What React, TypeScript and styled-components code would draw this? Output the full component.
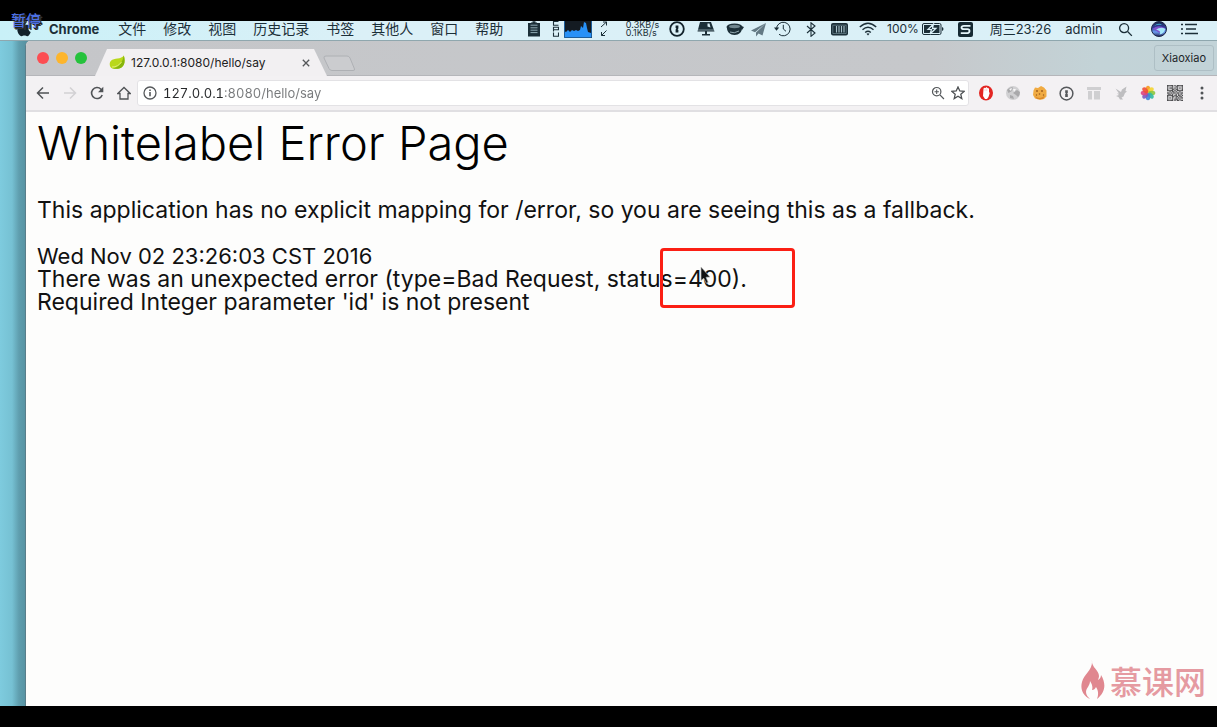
import React from "react";
import styled, { createGlobalStyle } from "styled-components";

const Global = createGlobalStyle`
  * { box-sizing: border-box; }
  body { margin: 0; background: #000; }
  button, input { font: inherit; color: inherit; margin: 0; padding: 0; border: 0; background: none; }
  svg { display: block; flex: none; }
`;

const ui = `Inter, "Noto Sans CJK SC", sans-serif`;

const Player = styled.div`
  position: relative;
  display: flex;
  flex-direction: column;
  min-height: 100vh;
  padding: 21px 0;
  background: #000;
  font-family: ${ui};
`;

const PauseLabel = styled.div`
  position: absolute;
  top: 11px;
  left: 11px;
  z-index: 2;
  font-size: 15px;
  font-weight: 500;
  line-height: 20px;
  color: #4c70e4;
  text-shadow: 1px 1px #222, 2px 2px #333;
`;

const Desktop = styled.div`
  flex: 1;
  display: flex;
  flex-direction: column;
  background: linear-gradient(90deg, #7ecbde 0, #76c1d3 12px, #5f9eae 19px, #5692a2 26px);
`;

const MenuBar = styled.header`
  display: flex;
  align-items: center;
  height: 20px;
  padding: 0 19px 3px 17px;
  background: linear-gradient(90deg, #c9f1f8, #dbf0f7 30%, #daf0f7);
  border-bottom: 1px solid #8fa7ae;
  color: #1c2f38;
`;

const Menus = styled.nav`
  display: flex;
  gap: 17px;
  margin-left: 18px;
`;

const MenuButton = styled.button<{ $app?: boolean }>`
  padding-right: ${(p) => (p.$app ? 2 : 0)}px;
  font-size: ${(p) => (p.$app ? 13 : 14)}px;
  line-height: 16px;
  font-weight: ${(p) => (p.$app ? 700 : 400)};
  white-space: nowrap;
`;

const Status = styled.div`
  display: flex;
  align-items: center;
  margin-left: auto;
`;

const StatusItem = styled.div<{ $gap: number; $w: number }>`
  flex: none;
  display: flex;
  justify-content: center;
  width: ${(p) => p.$w}px;
  margin-left: ${(p) => p.$gap}px;
  font-size: 13px;
  line-height: 16px;
  white-space: nowrap;
`;

const Rates = styled.div`
  font-size: 9px;
  line-height: 8px;
`;

const Small = styled.span`
  font-size: 12px;
`;

const Window = styled.main`
  flex: 1;
  display: flex;
  flex-direction: column;
  margin-left: 25px;
  border-left: 1px solid #5a7f8b;
  border-top-left-radius: 5px;
  background: #fdfdfc;
  overflow: hidden;
`;

const TabStrip = styled.div`
  display: flex;
  align-items: flex-end;
  height: 35px;
  padding: 0 3px 0 11px;
  background: linear-gradient(90deg, #c5c6c9 0, #c6c8cb 76%, #c3d3d7 90%, #c2d3d8);
  border-bottom: 1px solid #b5b6ba;
`;

const Lights = styled.div`
  display: flex;
  align-self: center;
  gap: 7px;
`;

const Light = styled.button<{ $color: string }>`
  width: 12px;
  height: 12px;
  border-radius: 50%;
  background: ${(p) => p.$color};
`;

const Tab = styled.div`
  display: flex;
  align-items: center;
  width: 232px;
  height: 27px;
  margin: 0 0 -1px 8px;
  padding: 0 16px 0 14px;
  background: #f2f0f2;
  clip-path: polygon(0 100%, 12px 0, 219px 0, 232px 100%);
  color: #222;
`;

const TabTitle = styled.span`
  flex: 1;
  margin-left: 6px;
  font-size: 12px;
  line-height: 16px;
`;

const TabClose = styled.button`
  width: 10px;
  height: 10px;
`;

const NewTab = styled.button`
  align-self: flex-end;
  margin: 0 0 3px -5px;
`;

const Profile = styled.button`
  height: 26px;
  margin: 0 0 4px auto;
  padding: 0 7px;
  border: 1px solid #aebfc5;
  border-radius: 3px;
  font-size: 11px;
  color: #1d2529;
`;

const Toolbar = styled.div`
  display: flex;
  align-items: center;
  height: 36px;
  padding: 0 2px 0 3px;
  background: #f3f1f3;
  border-bottom: 2px solid #e0dfe2;
`;

const Tool = styled.button`
  display: flex;
  align-items: center;
  justify-content: center;
  flex: none;
  width: 27px;
  height: 26px;
`;

const Omnibox = styled.form`
  flex: 1;
  display: flex;
  align-items: center;
  gap: 6px;
  height: 26px;
  padding: 0 3px 0 5px;
  border: 1px solid #e3e2e5;
  border-radius: 3px;
  background: #fff;
`;

const Address = styled.input`
  flex: 1;
  min-width: 0;
  height: 20px;
  outline: 0;
  font-size: 13px;
  font-variant-numeric: tabular-nums;
  background: linear-gradient(90deg, #26282a 61px, #77797b 61px);
  background-clip: text;
  -webkit-text-fill-color: transparent;
`;

const Extensions = styled.div`
  display: flex;
  margin-left: 3px;
`;

const Page = styled.article`
  position: relative;
  flex: 1;
  padding: 4px 11px;
  font-family: Inter, sans-serif;
  font-size: 23px;
  line-height: 23px;
  color: #111;
`;

const Title = styled.h1`
  margin: 0 0 29px;
  font-size: 47px;
  line-height: 54px;
  font-weight: 300;
  color: #000;
`;

const Text = styled.p`
  margin: 0 0 23px;
`;

const Created = styled.div`
  font-size: 22px;
`;

const Highlight = styled.div`
  position: absolute;
  top: 136px;
  left: 634px;
  width: 135px;
  height: 60px;
  border: 3px solid #fb1f14;
  border-radius: 4px;
`;

const Pointer = styled.svg`
  position: absolute;
  top: 155px;
  left: 674px;
`;

const Watermark = styled.div`
  position: absolute;
  right: 11px;
  bottom: 6px;
  display: flex;
  align-items: center;
  gap: 5px;
  font-family: "Noto Sans CJK SC", sans-serif;
  font-size: 32px;
  font-weight: 500;
  line-height: 40px;
  color: #e59aa1;
`;

const ink = "#1c2f38";

const OnePassword = ({ size, color, w }: { size: number; color: string; w: number }) => (
  <svg width={size} height={size} viewBox="0 0 16 16">
    <circle cx="8" cy="8" r="6.8" fill="none" stroke={color} strokeWidth={w} />
    <path d="M6.6 4.4h2.8v3l-.8.8.8.7v2.7H6.6v-3l.8-.8-.8-.7z" fill={color} />
  </svg>
);

const Glass = ({ size, plus }: { size: number; plus?: boolean }) => (
  <svg width={size} height={size} viewBox="0 0 16 16" fill="none" stroke={plus ? "#55585b" : ink} strokeWidth="1.4">
    <circle cx="6.5" cy="6.5" r="4.8" />
    <path d="M10.2 10.2l4.6 4.6" />
    {plus && <path d="M4 6.5h5M6.5 4v5" strokeWidth="1.2" />}
  </svg>
);

const qr = [
  "1111101011111", "1000100110001", "1011101010101", "1000110110001", "1111101011111", "0010110100100",
  "1101011011011", "0110100101010", "1111101101101", "1000110110110", "1010100101011", "1000101110100", "1111101011011",
];

const menus = ["文件", "修改", "视图", "历史记录", "书签", "其他人", "窗口", "帮助"];

export default function App() {
  return (
    <Player>
      <Global />
      <PauseLabel>暂停</PauseLabel>
      <Desktop>
        <MenuBar>
          <svg width="14" height="16" viewBox="0 0 14 16" fill="#12222b">
            <path d="M7 4.500C8 4.400 9 3.600 10.300 3.700c1.200.1 2.200.7 2.800 1.600-2.400 1.500-2 4.700.6 5.700-.6 1.800-2 4.300-3.500 4.300-1.100 0-1.500-.7-2.800-.7s-1.800.7-2.800.7C2.500 15.300.3 11.600.3 8.600c0-3.200 1.900-4.800 3.800-4.800 1.200 0 2.100.7 2.900.7zM9.800 0c.2 1.700-1.300 3.400-2.900 3.300C6.700 1.600 8.200.2 9.800 0z" />
          </svg>
          <Menus>
            <MenuButton $app>Chrome</MenuButton>
            {menus.map((m) => <MenuButton key={m}>{m}</MenuButton>)}
          </Menus>
          <Status>
            <StatusItem $gap={0} $w={14}>
              <svg width="14" height="16" viewBox="0 0 14 16">
                <path d="M1 2h3v-.5h1.500V.3h3v1.200H10V2h3v13.500H1z" fill={ink} />
                <path d="M3.500 4.200h7M3.500 6.800h7M3.500 9.200h7M3.500 11.600h7" stroke="#8fa9b2" />
              </svg>
            </StatusItem>
            <StatusItem $gap={11} $w={7}>
              <svg width="7" height="16" viewBox="0 0 7 16" fill="none" stroke={ink} strokeWidth="1.100">
                <path d="M6.500.5h-5v3.800h5M1.500 10.500V6.300h5v2.400h-5M1.500 11.500v3.800h5v-3.800" />
              </svg>
            </StatusItem>
            <StatusItem $gap={5} $w={28}>
              <svg width="28" height="17" viewBox="0 0 28 17">
                <path d="M0 0h28v17H0z" fill="#141b22" />
                <path d="M0 17V10l2 1 2-2 2 2 2-2 2 1 2-1 2 1 2-1 1-4 2 2 1-6 2 1 1 5 1 4 3 1v5z" fill="#2791f7" />
                <path d="M.5 0v16.500h27V0" fill="none" stroke="#1d5e9b" />
              </svg>
            </StatusItem>
            <StatusItem $gap={8} $w={8}>
              <svg width="8" height="16" viewBox="0 0 8 16" fill="none" stroke={ink}>
                <path d="M1 6l5.500-5M3 1h3.500v3.500M6.500 9.500L1.500 14.500M1.500 11v3.500H5" />
              </svg>
            </StatusItem>
            <StatusItem $gap={17} $w={35}><Rates>0.3KB/s<br />0.1KB/s</Rates></StatusItem>
            <StatusItem $gap={9} $w={16}><OnePassword size={16} color="#12222b" w={1.8} /></StatusItem>
            <StatusItem $gap={12} $w={18}>
              <svg width="18" height="16" viewBox="0 0 18 16" fill={ink}>
                <path d="M3 1h11l3.500 9.500H.5zM8 10h2v3h3v1.500H5V13h3z" />
                <path d="M10.500 2.500h2l1 4-3-1z" fill="#d5eaf1" />
                <path d="M1 9h16" stroke="#a9c0c8" strokeWidth=".7" />
              </svg>
            </StatusItem>
            <StatusItem $gap={11} $w={18}>
              <svg width="18" height="14" viewBox="0 0 18 14">
                <ellipse cx="8.500" cy="5" rx="8" ry="3.600" fill={ink} />
                <path d="M1 6c0 4 3 7 7.500 7S16 10 16 6z" fill={ink} />
                <ellipse cx="8.500" cy="4.500" rx="5.500" ry="1.700" fill="#6f858e" />
                <path d="M4 10q4 2 9-1" stroke="#93a9b1" fill="none" />
                <path d="M15 4l3 1-2 3z" fill={ink} />
              </svg>
            </StatusItem>
            <StatusItem $gap={7} $w={15}>
              <svg width="15" height="15" viewBox="0 0 15 15" fill="#637984">
                <path d="M15 1L0 8.500l4 1.700zM15 1L5 10.500v4l2.500-3 4 2z" />
              </svg>
            </StatusItem>
            <StatusItem $gap={8} $w={17}>
              <svg width="17" height="16" viewBox="0 0 17 16" fill="none" stroke={ink}>
                <path d="M2.500 8A6.800 6.800 0 1 1 5 13.300M9.300 3.800V8l2.700 2.300" />
                <path d="M0 6.500h5.200L2.500 9.800z" fill={ink} stroke="none" />
              </svg>
            </StatusItem>
            <StatusItem $gap={15} $w={10}>
              <svg width="10" height="15" viewBox="0 0 10 15" fill="none" stroke={ink} strokeWidth="1.100">
                <path d="M1 4l8 7-4 3.300V.8L9 4l-8 7" />
              </svg>
            </StatusItem>
            <StatusItem $gap={15} $w={17}>
              <svg width="17" height="13" viewBox="0 0 17 13">
                <rect width="17" height="12.500" rx="2" fill={ink} />
                <path d="M5.500 3v6.500M8 3v6.500M10.500 3v6.500M13 3v6.500" stroke="#a9c2cb" strokeWidth="1.100" />
                <path d="M1.800 2.200h13.400v8.300H1.800z" fill="none" stroke="#7d98a2" strokeWidth=".6" />
              </svg>
            </StatusItem>
            <StatusItem $gap={11} $w={18}>
              <svg width="18" height="14" viewBox="0 0 18 14" fill="none" stroke={ink} strokeWidth="1.400">
                <path d="M.8 5q8.200-7.500 16.400 0M3.500 7.800q5.500-5 11 0M6.200 10.400q2.800-2.500 5.600 0" />
                <path d="M7.500 11.800L9 13.500l1.500-1.700q-1.500-1.200-3 0z" fill={ink} stroke="none" />
              </svg>
            </StatusItem>
            <StatusItem $gap={11} $w={30}><Small>100%</Small></StatusItem>
            <StatusItem $gap={4} $w={22}>
              <svg width="22" height="12" viewBox="0 0 22 12">
                <rect x=".5" y=".5" width="18.500" height="11" rx="1.500" fill="none" stroke={ink} />
                <path d="M2 2h15.500v8H2z" fill={ink} />
                <path d="M11.500 1L6 6.500h3.500L8 11l6-5.700h-3.500z" fill={ink} stroke="#daf0f7" strokeWidth="1.200" />
                <path d="M20 4v4q1.500-.5 1.500-2T20 4z" fill={ink} />
              </svg>
            </StatusItem>
            <StatusItem $gap={14} $w={15}>
              <svg width="15" height="15" viewBox="0 0 15 15">
                <rect width="15" height="15" rx="2" fill="#162a33" />
                <path d="M12.500 3.800H6Q3.500 3.800 3.500 5.500T6 7.200h3.500q2 0 2 1.900t-2 2H2.800" fill="none" stroke="#e4f5fa" strokeWidth="1.800" />
              </svg>
            </StatusItem>
            <StatusItem $gap={15} $w={65}>周三23:26</StatusItem>
            <StatusItem $gap={11} $w={40}>admin</StatusItem>
            <StatusItem $gap={13} $w={16}><Glass size={15} /></StatusItem>
            <StatusItem $gap={18} $w={16}>
              <svg width="16" height="16" viewBox="0 0 16 16">
                <defs>
                  <linearGradient id="siri" x1="0" y1="0" x2="0" y2="1">
                    <stop offset="0" stopColor="#172a48" /><stop offset=".4" stopColor="#343c9e" />
                    <stop offset=".7" stopColor="#6b9cf0" /><stop offset="1" stopColor="#212353" />
                  </linearGradient>
                </defs>
                <circle cx="8" cy="8" r="7.500" fill="url(#siri)" stroke="#1c2748" strokeWidth="1" />
                <path d="M1.500 8q5-5 12.500-1-4 6-7 4-2-2-5.500-3z" fill="#7e52cc" />
                <path d="M5 8.500q5-3 9.500-.5-2 5-6 5.500Q11 10 5 8.500z" fill="#a5e8fa" />
                <path d="M3 5q5-4 8-1-4-1-8 1z" fill="#3fb3d8" />
              </svg>
            </StatusItem>
            <StatusItem $gap={14} $w={17}>
              <svg width="17" height="12" viewBox="0 0 17 12" stroke={ink} strokeWidth="1.600">
                <path d="M0 1.500h2M4 1.500h12M0 6h2M5 6h10M0 10.500h2M4 10.500h13" />
              </svg>
            </StatusItem>
          </Status>
        </MenuBar>

        <Window>
          <TabStrip>
            <Lights>
              <Light $color="#fc4d52" aria-label="Close" />
              <Light $color="#fdb52c" aria-label="Minimize" />
              <Light $color="#25c23c" aria-label="Zoom" />
            </Lights>
            <Tab>
              <svg width="16" height="15" viewBox="0 0 16 15">
                <path d="M14.800.5c1.600 5 .8 9.700-2 11.800-2.600 2-7 1.600-9.600 1.200C.3 12 0 8 2 5.800 5 2.800 12.500 4.500 14.800.5z" fill="#b9d81a" />
                <path d="M14.800.5c1.600 5 .8 9.700-2 11.800-2.600 2-7 1.600-9.600 1.200 5-.5 10-4 11.600-13z" fill="#86b50c" />
                <path d="M3 12q6 0 9.500-5" stroke="#dfee78" fill="none" />
              </svg>
              <TabTitle>127.0.0.1:8080/hello/say</TabTitle>
              <TabClose aria-label="Close tab">
                <svg width="10" height="10" viewBox="0 0 10 10" stroke="#55575a" strokeWidth="1.300"><path d="M1.800 1.800l6.400 6.400M8.200 1.800L1.800 8.200" /></svg>
              </TabClose>
            </Tab>
            <NewTab aria-label="New tab">
              <svg width="34" height="17" viewBox="0 0 34 17"><path d="M4 1h21q2 0 3 2l4.500 11q.5 1.500-1.500 1.500H10q-2 0-3-2L2 3Q1.500 1 4 1z" fill="#cbcccf" stroke="#aeb0b4" /></svg>
            </NewTab>
            <Profile>Xiaoxiao</Profile>
          </TabStrip>

          <Toolbar>
            <Tool aria-label="Back"><svg width="14" height="14" viewBox="0 0 14 14" fill="none" stroke="#505356" strokeWidth="1.500"><path d="M13 7H1.500M7 1.500L1.500 7 7 12.500" /></svg></Tool>
            <Tool aria-label="Forward"><svg width="14" height="14" viewBox="0 0 14 14" fill="none" stroke="#d2d1d4" strokeWidth="1.500"><path d="M1 7h11.500M7 1.500L12.500 7 7 12.500" /></svg></Tool>
            <Tool aria-label="Reload"><svg width="14" height="14" viewBox="0 0 14 14" fill="none" stroke="#505356" strokeWidth="1.600"><path d="M12.200 9A5.500 5.500 0 1 1 11 3.200l1.300 1.500" /><path d="M13.300.8v5.400H8z" fill="#505356" stroke="none" /></svg></Tool>
            <Tool aria-label="Home"><svg width="14" height="14" viewBox="0 0 14 14" fill="none" stroke="#505356" strokeWidth="1.300"><path d="M.8 7.500L7 1.500l6.200 6H11V13H3V7.500z" /></svg></Tool>
            <Omnibox>
              <svg width="14" height="14" viewBox="0 0 14 14" fill="none" stroke="#55585b" strokeWidth="1.300"><circle cx="7" cy="7" r="6" /><path d="M7 6v4.300M7 3.500V5" strokeWidth="1.600" /></svg>
              <Address aria-label="Address" defaultValue="127.0.0.1:8080/hello/say" />
              <Glass size={14} plus />
              <svg width="14" height="14" viewBox="0 0 14 14" fill="none" stroke="#4d5053" strokeWidth="1.300"><path d="M7 1l1.800 4 4.300.4-3.300 2.900 1 4.300L7 10.300l-3.800 2.300 1-4.300L.9 5.400 5.200 5z" /></svg>
            </Omnibox>
            <Extensions>
              <Tool aria-label="AdBlock">
                <svg width="16" height="16" viewBox="0 0 16 16"><ellipse cx="8" cy="8" rx="7" ry="7.500" fill="#e32622" /><path d="M5.500 3.500l1-.8 1 .2 1-.9 1 1 1.500.5V8l1-1-1.500 5-1.500 2H7L5 11z" fill="#fff" /><path d="M7 3.500V6M8.700 3.500V6" stroke="#f5b7b5" strokeWidth=".5" /></svg>
              </Tool>
              <Tool aria-label="Globe">
                <svg width="16" height="16" viewBox="0 0 16 16"><circle cx="8" cy="8" r="7" fill="#d0d0d2" /><path d="M2 5q3-3.500 6-2.500L7 6 3.500 8zM8 8l4-3 3 2q0 3-2 5l-2-2zM5 10l3 1 1 3-4-1z" fill="#a9a9ab" /><path d="M4 4l3-1-1 3zM8 4l3 0-2 3z" fill="#f7f7f7" /></svg>
              </Tool>
              <Tool aria-label="Cookies">
                <svg width="16" height="16" viewBox="0 0 16 16"><path d="M3 2.500L6 3l3-2 3 1.500 2.500 3v6L12 14l-4 1-5-1.500L1 10l.5-4.500z" fill="#f0ab42" /><path d="M3 11q5 4 10-.5l-2 3.500H5z" fill="#d9882a" /><g fill="#9a5a1c"><circle cx="5" cy="6" r=".9" /><circle cx="10" cy="6" r=".9" /><circle cx="7.500" cy="9" r=".8" /><circle cx="11.500" cy="10" r=".7" /><circle cx="4.500" cy="10" r=".7" /></g></svg>
              </Tool>
              <Tool aria-label="1Password"><OnePassword size={15} color="#55585b" w={1.6} /></Tool>
              <Tool aria-label="Layout">
                <svg width="16" height="16" viewBox="0 0 16 16" fill="#cfcfd1"><path d="M1 2h14v3H1zM2 6h4v8.500H2zM8 6h6v8.500H8z" /></svg>
              </Tool>
              <Tool aria-label="Bird">
                <svg width="14" height="16" viewBox="0 0 14 16" fill="#bebec0"><path d="M1.500 3.500L7 7l1-2.500L12.500 1.500 11.500 6l1.500.5-2 1.500-1.500 3.500L7.500 12.500l1.500 2H6L4.500 12 2 11l3-1L3 8.500h2z" /></svg>
              </Tool>
              <Tool aria-label="Photos">
                <svg width="16" height="16" viewBox="0 0 16 16">
                  {["#f79a1e", "#f4d52f", "#8bc63f", "#30b9a0", "#3d86d8", "#7e5abf", "#dd4682", "#ef5036"].map((c, i) => (
                    <ellipse key={c} cx="8" cy="4.200" rx="2.300" ry="3.500" fill={c} opacity=".9" transform={`rotate(${i * 45} 8 8)`} />
                  ))}
                </svg>
              </Tool>
              <Tool aria-label="QR code">
                <svg width="16" height="16" viewBox="0 0 13 13" fill="#4c4c4e">
                  <path d="M0 0h13v13H0z" fill="#d5d4d6" />
                  {qr.map((row, y) => row.split("").map((b, x) => b === "1" && <rect key={`${x}-${y}`} x={x} y={y} width="1" height="1" />))}
                </svg>
              </Tool>
              <Tool aria-label="Menu"><svg width="4" height="14" viewBox="0 0 4 14" fill="#505356"><circle cx="2" cy="2" r="1.500" /><circle cx="2" cy="7" r="1.500" /><circle cx="2" cy="12" r="1.500" /></svg></Tool>
            </Extensions>
          </Toolbar>

          <Page>
            <Title>Whitelabel Error Page</Title>
            <Text>This application has no explicit mapping for /error, so you are seeing this as a fallback.</Text>
            <Created>Wed Nov 02 23:26:03 CST 2016</Created>
            <div>There was an unexpected error (type=Bad Request, status=400).</div>
            <div>Required Integer parameter 'id' is not present</div>
            <Highlight />
            <Pointer width="12" height="18" viewBox="0 0 12 18"><path d="M1 0l9 10-4 .3 2.200 5-2 1-2.400-5L1 13.500z" fill="#111" stroke="#bbb" strokeWidth=".7" /></Pointer>
            <Watermark>
              <svg width="24" height="40" viewBox="0 0 24 40" fill="#e0878f"><path d="M11 0c-1 7 7 10 7 16 0 2-1 3-1 4 2-1 3-3 3-5 5 8 5 17-4 24 2-5 1-9-1-12-1 2-2 3-4 3 1-3 0-6-2-9 0 5-4 7-4 11 0 3 2 5 4 7C2 36-1 29 1 22 3 14 12 10 11 0z" /></svg>
              慕课网
            </Watermark>
          </Page>
        </Window>
      </Desktop>
    </Player>
  );
}
